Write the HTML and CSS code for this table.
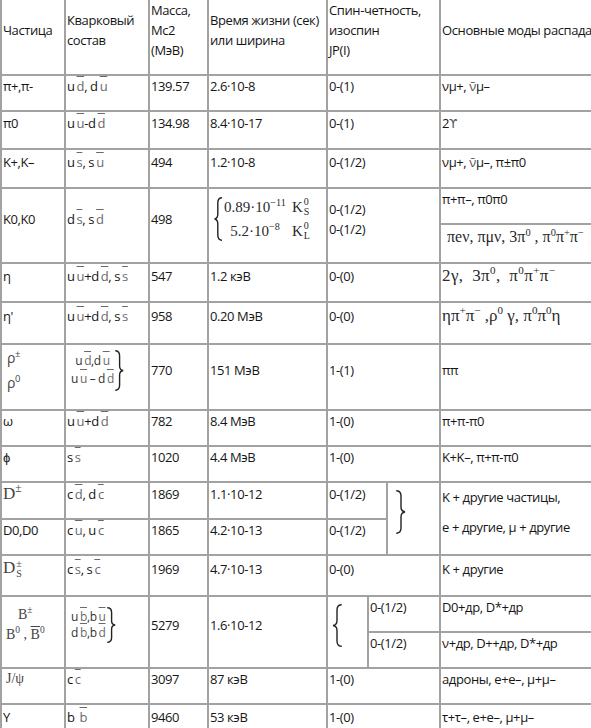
FILE: index.html
```html
<!DOCTYPE html>
<html lang="ru">
<head>
<meta charset="utf-8">
<title>Мезоны</title>
<link rel="stylesheet" href="styles.css">
</head>
<body>
<table class="mesons">
<colgroup>
<col class="c-name"><col class="c-quark"><col class="c-mass"><col class="c-life"><col class="c-s1"><col class="c-s2"><col class="c-s3"><col class="c-decay">
</colgroup>
<tr class="r-head">
<td>Частица</td>
<td>Кварковый<br>состав</td>
<td>Масса,<br>Mc2<br>(МэВ)</td>
<td>Время жизни (сек)<br>или ширина</td>
<td colspan="3">Спин-четность,<br>изоспин<br>JP(I)</td>
<td>Основные моды распада</td>
</tr>
<tr class="r-pi">
<td>π+,π-</td>
<td>u<span class="ab">d</span>, d<span class="ab">u</span></td>
<td>139.57</td>
<td>2.6·10-8</td>
<td colspan="3">0-(1)</td>
<td>νμ+, <span class="nub">ν̄</span>μ–</td>
</tr>
<tr class="r-pi0">
<td>π0</td>
<td>u<span class="ab">u</span>-d<span class="ab">d</span></td>
<td>134.98</td>
<td>8.4·10-17</td>
<td colspan="3">0-(1)</td>
<td>2<span class="gam">ϒ</span></td>
</tr>
<tr class="r-k">
<td>K+,K–</td>
<td>u<span class="ab">s</span>, s<span class="ab">u</span></td>
<td>494</td>
<td>1.2·10-8</td>
<td colspan="3">0-(1/2)</td>
<td>νμ+, <span class="nub">ν̄</span>μ–, π±π0</td>
</tr>
<tr class="r-k0a">
<td rowspan="2">K0,K0</td>
<td rowspan="2">d<span class="ab">s</span>, s<span class="ab">d</span></td>
<td rowspan="2">498</td>
<td rowspan="2">
<div class="sys">
<svg class="brace" width="8" height="44" viewBox="0 0 8 44"><path d="M7.5,0.8 Q3.8,1.2 3.8,6 L3.8,17 Q3.8,21.4 0.6,22 Q3.8,22.6 3.8,27 L3.8,38 Q3.8,42.8 7.5,43.2"/></svg>
<div class="sys-rows">
<span class="mant">0.89·10<sup>−11</sup></span><span class="kk">K<span class="ss"><span>0</span><span>S</span></span></span>
<span class="mant">5.2·10<sup>−8</sup></span><span class="kk">K<span class="ss"><span>0</span><span>L</span></span></span>
</div>
</div>
</td>
<td rowspan="2" colspan="3">0-(1/2)<br>0-(1/2)</td>
<td>π+π–, π0π0</td>
</tr>
<tr class="r-k0b">
<td class="serif ind">πeν, πμν, 3π<sup>0</sup> , π<sup>0</sup>π<sup>+</sup>π<sup>−</sup></td>
</tr>
<tr class="r-eta">
<td>η</td>
<td>u<span class="ab">u</span>+d<span class="ab">d</span>, s<span class="ab">s</span></td>
<td>547</td>
<td>1.2 кэВ</td>
<td colspan="3">0-(0)</td>
<td class="serif wide">2γ, 3π<sup>0</sup>, π<sup>0</sup>π<sup>+</sup>π<sup>−</sup></td>
</tr>
<tr class="r-etap">
<td>η'</td>
<td>u<span class="ab">u</span>+d<span class="ab">d</span>, s<span class="ab">s</span></td>
<td>958</td>
<td>0.20 МэВ</td>
<td colspan="3">0-(0)</td>
<td class="serif">ηπ<sup>+</sup>π<sup>−</sup> ,ρ<sup>0</sup> γ, π<sup>0</sup>π<sup>0</sup>η</td>
</tr>
<tr class="r-rho">
<td class="sym"><div class="sym-lines"><div>ρ<sup>±</sup></div><div>ρ<sup>0</sup></div></div></td>
<td>
<div class="grp">
<div class="grp-lines"><div>u<span class="ab">d</span>,d<span class="ab">u</span></div><div>u<span class="ab">u</span> – d<span class="ab">d</span></div></div>
<svg class="brace" width="9" height="41" viewBox="0 0 9 41"><path d="M0.8,0.8 Q4.6,1.2 4.6,6 L4.6,16 Q4.6,20 8.2,20.5 Q4.6,21 4.6,25 L4.6,35 Q4.6,39.8 0.8,40.2"/></svg>
</div>
</td>
<td>770</td>
<td>151 МэВ</td>
<td colspan="3">1-(1)</td>
<td>ππ</td>
</tr>
<tr class="r-omega">
<td>ω</td>
<td>u<span class="ab">u</span>+d<span class="ab">d</span></td>
<td>782</td>
<td>8.4 МэВ</td>
<td colspan="3">1-(0)</td>
<td>π+π-π0</td>
</tr>
<tr class="r-phi">
<td>ϕ</td>
<td>s<span class="ab">s</span></td>
<td>1020</td>
<td>4.4 МэВ</td>
<td colspan="3">1-(0)</td>
<td>K+K–, π+π-π0</td>
</tr>
<tr class="r-dpm">
<td class="dsym">D<sup>±</sup></td>
<td>c<span class="ab">d</span>, d<span class="ab">c</span></td>
<td>1869</td>
<td>1.1·10-12</td>
<td colspan="2">0-(1/2)</td>
<td rowspan="2" class="brace-cell">
<svg class="brace" width="10" height="44" viewBox="0 0 10 44"><path d="M0.8,0.8 Q5,1.2 5,6 L5,17 Q5,21.4 9,22 Q5,22.6 5,27 L5,38 Q5,42.8 0.8,43.2"/></svg>
</td>
<td rowspan="2"><div class="para">K + другие частицы,</div><div>e + другие, μ + другие</div></td>
</tr>
<tr class="r-d0">
<td>D0,D0</td>
<td>c<span class="ab">u</span>, u<span class="ab">c</span></td>
<td>1865</td>
<td>4.2·10-13</td>
<td colspan="2">0-(1/2)</td>
</tr>
<tr class="r-ds">
<td class="dsym">D<span class="ss"><span>±</span><span>S</span></span></td>
<td>c<span class="ab">s</span>, s<span class="ab">c</span></td>
<td>1969</td>
<td>4.7·10-13</td>
<td colspan="3">0-(0)</td>
<td>K + другие</td>
</tr>
<tr class="r-ba">
<td rowspan="2" class="bsym"><div class="b1">B<sup>±</sup></div><div>B<sup>0</sup> , <span class="ob">B</span><sup>0</sup></div></td>
<td rowspan="2">
<div class="grp">
<div class="grp-lines"><div>u<span class="ab">b</span>,b<span class="ab">u</span></div><div>d<span class="ab">b</span>,b<span class="ab">d</span></div></div>
<svg class="brace" width="9" height="36" viewBox="0 0 9 36"><path d="M0.8,0.8 Q4.6,1.2 4.6,5.5 L4.6,14 Q4.6,17.6 8.2,18 Q4.6,18.4 4.6,22 L4.6,30.5 Q4.6,34.8 0.8,35.2"/></svg>
</div>
</td>
<td rowspan="2">5279</td>
<td rowspan="2">1.6·10-12</td>
<td rowspan="2" class="brace-cell-b">
<svg class="brace" width="10" height="43" viewBox="0 0 10 43"><path d="M9.2,0.8 Q5,1.2 5,6 L5,16.5 Q5,21 1,21.5 Q5,22 5,26.5 L5,37 Q5,42 9.2,42.2"/></svg>
</td>
<td colspan="2">0-(1/2)</td>
<td>D0+др, D*+др</td>
</tr>
<tr class="r-bb">
<td colspan="2">0-(1/2)</td>
<td>ν+др, D++др, D*+др</td>
</tr>
<tr class="r-jpsi">
<td class="jsym">J/ψ</td>
<td>c<span class="ab">c</span></td>
<td>3097</td>
<td>87 кэВ</td>
<td colspan="3">1-(0)</td>
<td>адроны, e+e–, μ+μ–</td>
</tr>
<tr class="r-ups">
<td>Υ</td>
<td>b <span class="ab">b</span></td>
<td>9460</td>
<td>53 кэВ</td>
<td colspan="3">1-(0)</td>
<td>τ+τ–, e+e–, μ+μ–</td>
</tr>
</table>
</body>
</html>
```

FILE: styles.css
```css
html, body {
  margin: 0;
  padding: 0;
  overflow: hidden;
  background: #ffffff;
}

body {
  font-family: "Open Sans", "Liberation Sans", sans-serif;
  font-size: 13px;
  letter-spacing: -0.4px;
  color: #161616;
}

.mesons {
  border-collapse: collapse;
  table-layout: fixed;
  width: 599px;
  margin-top: -2px;
}

.c-name { width: 64px; }
.c-quark { width: 84px; }
.c-mass { width: 59px; }
.c-life { width: 119px; }
.c-s1 { width: 41px; }
.c-s2 { width: 19px; }
.c-s3 { width: 53px; }
.c-decay { width: 160px; }

.mesons td {
  border: 2px solid #a2a2a2;
  padding: 0 1px 14px 1px;
  vertical-align: middle;
  text-align: left;
  line-height: 20px;
  white-space: nowrap;
}

sup, sub {
  font-size: 68%;
  line-height: 0;
}

.r-head { height: 75px; }
.r-pi { height: 36px; }
.r-pi0 { height: 38px; }
.r-k { height: 39px; }
.r-k0a { height: 35px; }
.r-k0b { height: 39px; }
.r-eta { height: 39px; }
.r-etap { height: 42px; }
.r-rho { height: 63px; }
.r-omega { height: 35px; }
.r-phi { height: 35px; }
.r-dpm { height: 37px; }
.r-d0 { height: 35px; }
.r-ds { height: 41px; }
.r-ba { height: 36px; }
.r-bb { height: 34px; }
.r-jpsi { height: 35px; }
.r-ups { height: 40px; }

/* antiquark with bar */
.ab {
  color: #6a6a6a;
  text-decoration: overline;
  margin-left: 2px;
}

.ob {
  text-decoration: overline;
}

.nub {
  color: #555;
}

.gam {
  color: #555;
  font-family: "DejaVu Sans", sans-serif;
  font-size: 12px;
}

.serif {
  font-family: "Liberation Serif", "Times New Roman", serif;
  font-size: 17px;
  letter-spacing: 0;
  color: #2a2a2a;
}

.serif sup {
  font-size: 65%;
}

.ind {
  padding-left: 6px !important;
  font-size: 16px;
}

.wide {
  word-spacing: 4px;
  letter-spacing: 0.4px;
}

/* K0 lifetimes system */
.sys {
  display: flex;
  align-items: center;
  margin-left: 4px;
}

.brace {
  flex: none;
  display: block;
}

.brace path {
  fill: none;
  stroke: #222;
  stroke-width: 1.4;
  stroke-linecap: round;
}

.sys-rows {
  display: grid;
  grid-template-columns: 66px auto;
  column-gap: 4px;
  font-family: "Liberation Serif", serif;
  font-size: 15px;
  letter-spacing: 0;
  line-height: 24px;
  color: #2a2a2a;
}

.mant {
  text-align: center;
}

.kk {
  display: inline-flex;
  align-items: center;
}

.ss {
  display: inline-flex;
  flex-direction: column;
  font-size: 10px;
  line-height: 10px;
  margin-left: 1px;
}

/* grouped quark contents with brace */
.grp {
  display: flex;
  align-items: center;
  margin-left: 4px;
}

.grp-lines {
  display: flex;
  flex-direction: column;
  align-items: center;
  font-size: 12px;
  line-height: 18px;
  color: #333;
}

.r-ba .grp-lines {
  line-height: 16px;
}

.grp .brace {
  margin-left: 1px;
}

/* particle symbols */
.sym-lines {
  color: #444;
  font-size: 14px;
  line-height: 25px;
  padding-left: 4px;
}

.dsym {
  font-family: "Liberation Serif", serif;
  font-size: 17px;
  letter-spacing: 0;
  color: #444;
}

.dsym .ss {
  font-size: 10px;
  line-height: 10px;
  vertical-align: middle;
}

.bsym {
  font-family: "Liberation Serif", serif;
  font-size: 14px;
  letter-spacing: 0;
  color: #444;
  line-height: 18px;
  padding-left: 4px !important;
}

.b1 {
  padding-left: 12px;
}

.jsym {
  font-family: "Liberation Serif", serif;
  font-size: 14px;
  letter-spacing: 0;
  color: #444;
  padding-left: 4px !important;
}

.para {
  margin-bottom: 10px;
}

.brace-cell {
  padding-left: 8px !important;
}

.brace-cell-b {
  padding-left: 4px !important;
}
```
